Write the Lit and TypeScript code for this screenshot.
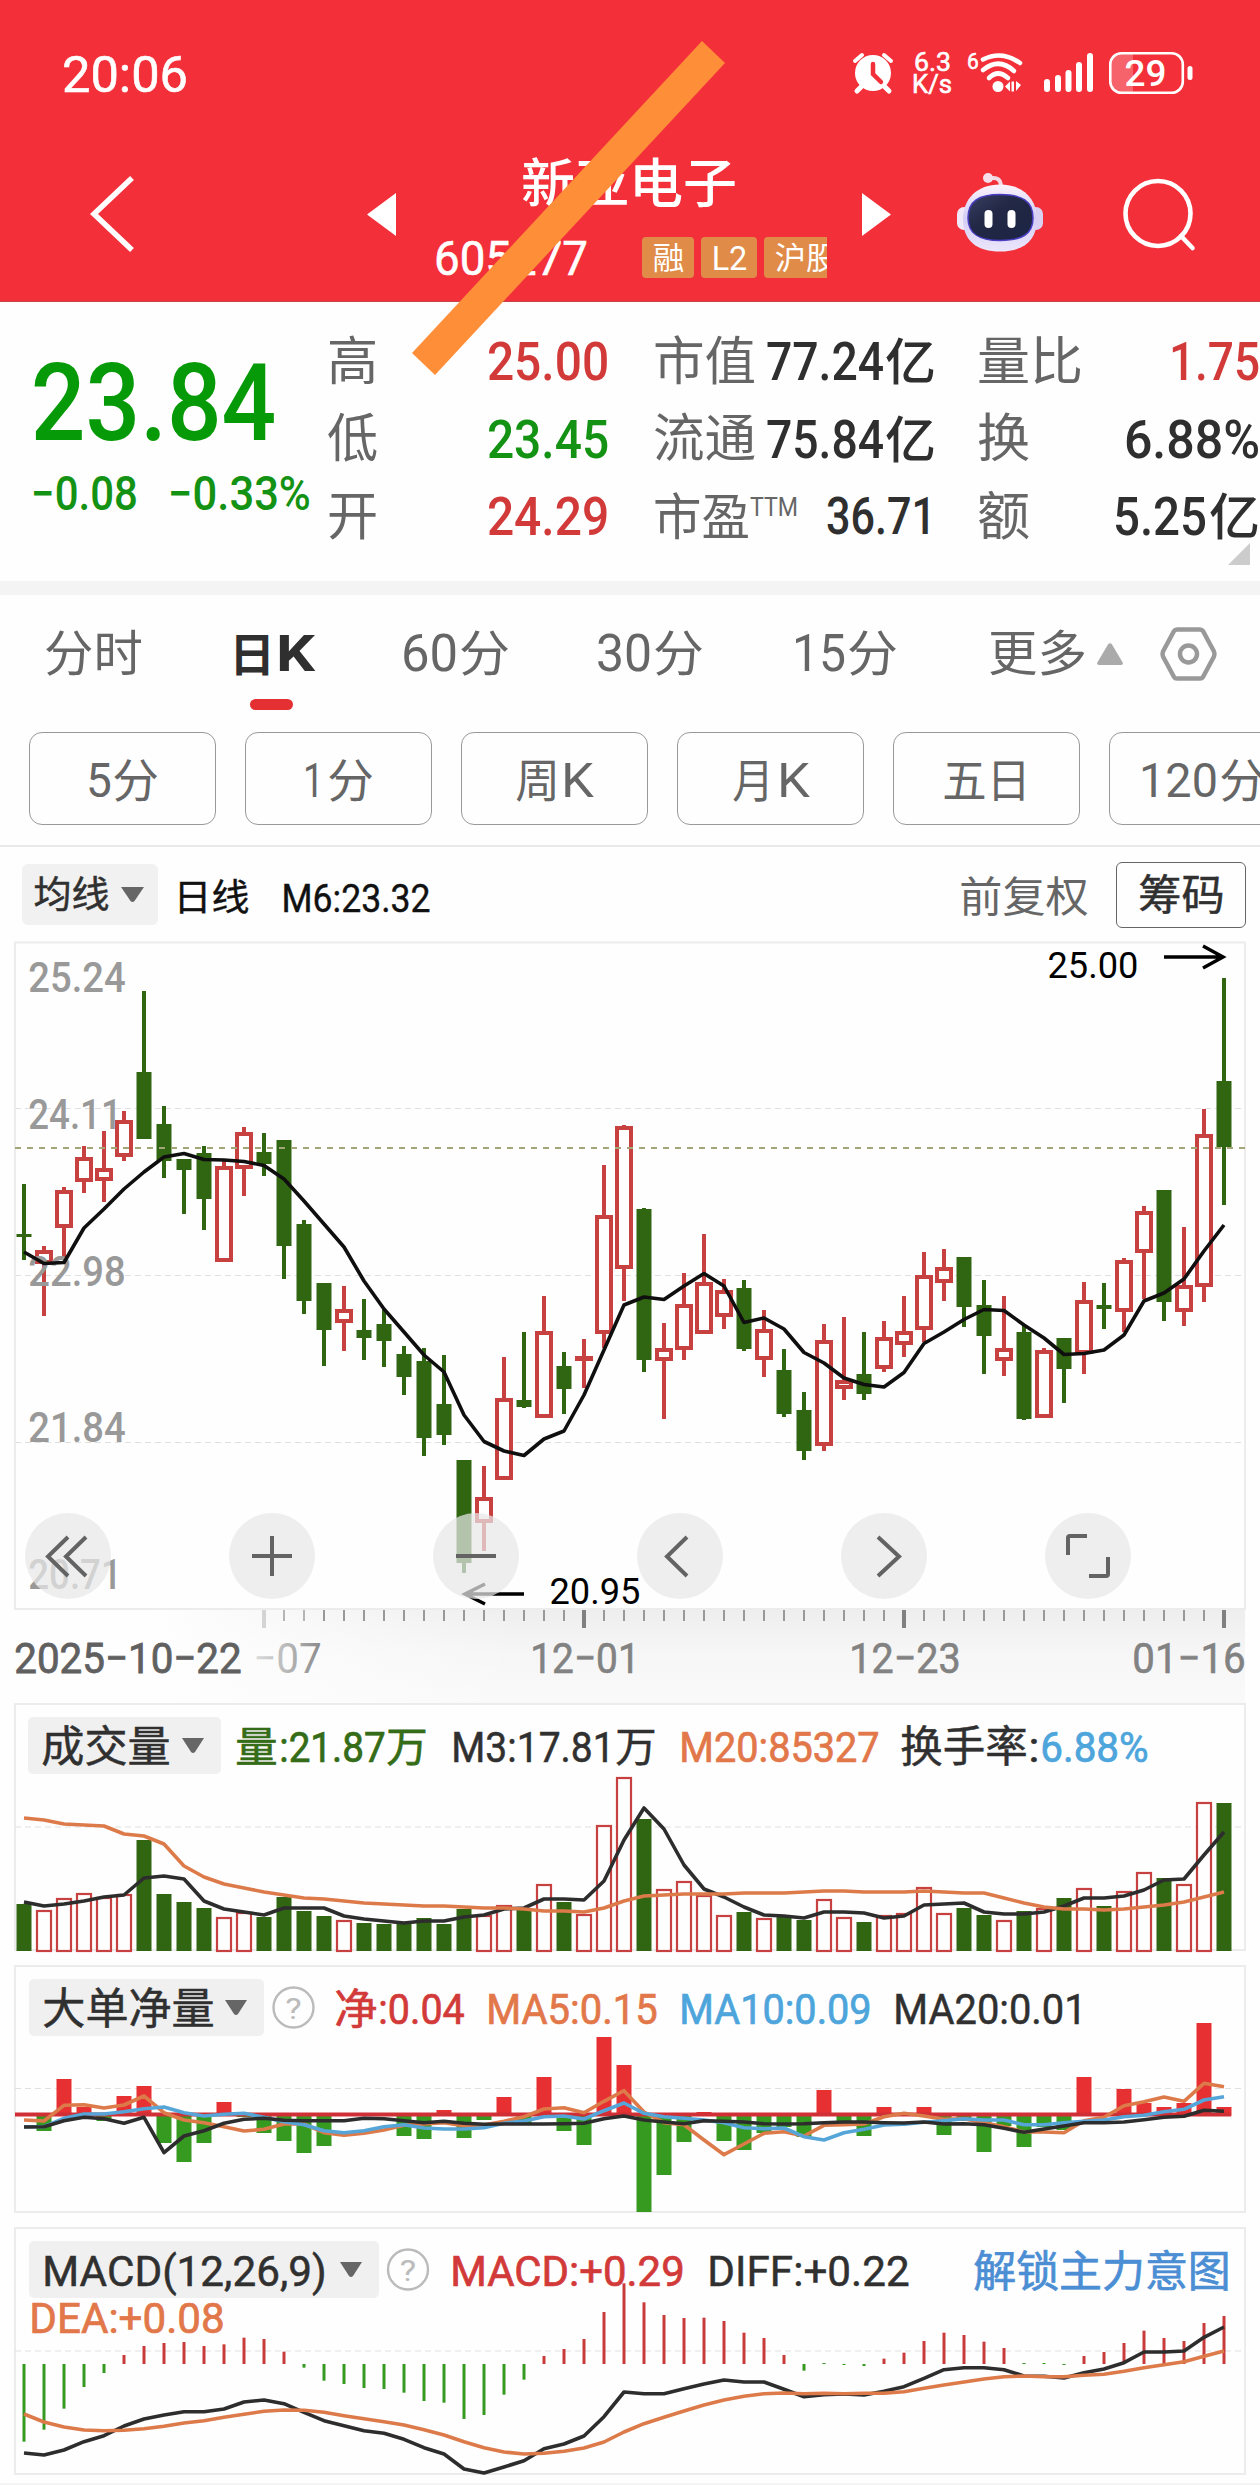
import { LitElement, html, svg, css } from "lit";
import { customElement } from "lit/decorators.js";

// A run of text: [text, x of its ink, ink width, optional font size]
type Run = [string, number, number, number?];

const run = (r: Run, size: number, base: number, cls = "") => {
  const s = r[3] ?? size;
  const side = s * 0.04;
  return svg`<text class=${cls} x=${r[1] - side} y=${base} font-size=${s} textLength=${r[2] + side * 2} lengthAdjust="spacingAndGlyphs">${r[0]}</text>`;
};

const label = (runs: Run[], size: number, cls = "") => {
  const last = runs[runs.length - 1];
  return html`<svg class="t ${cls}" width=${last[1] + last[2]} height=${size}>${runs.map((r) => run(r, size, size * 0.862))}</svg>`;
};

const X = (i: number) => 24 + 20 * i;

// Daily candles: [direction, high, body top, body bottom, low]
const candles: [string, number, number, number, number][] = [
  ["g", 1184, 1234, 1237, 1260], ["r", 1246, 1250, 1264, 1316], ["r", 1187, 1190, 1228, 1258], ["r", 1146, 1157, 1182, 1193],
  ["r", 1131, 1168, 1181, 1202], ["r", 1111, 1120, 1157, 1161], ["g", 991, 1072, 1139, 1139], ["g", 1106, 1124, 1161, 1178],
  ["g", 1159, 1159, 1170, 1214], ["g", 1146, 1153, 1199, 1230], ["r", 1161, 1166, 1262, 1262], ["r", 1127, 1132, 1169, 1196],
  ["g", 1133, 1152, 1164, 1176], ["g", 1140, 1140, 1246, 1279], ["g", 1220, 1224, 1301, 1314], ["g", 1283, 1283, 1330, 1366],
  ["r", 1286, 1309, 1323, 1351], ["g", 1299, 1330, 1338, 1360], ["g", 1309, 1324, 1341, 1367], ["g", 1346, 1354, 1377, 1395],
  ["g", 1348, 1361, 1438, 1456], ["g", 1355, 1404, 1435, 1445], ["g", 1460, 1460, 1563, 1573], ["r", 1466, 1497, 1523, 1551],
  ["r", 1357, 1398, 1480, 1480], ["g", 1332, 1400, 1407, 1408], ["r", 1296, 1331, 1418, 1418], ["g", 1352, 1366, 1389, 1414],
  ["r", 1339, 1356, 1361, 1388], ["r", 1165, 1215, 1334, 1348], ["r", 1125, 1126, 1269, 1301], ["g", 1208, 1209, 1360, 1372],
  ["r", 1323, 1348, 1361, 1419], ["r", 1273, 1304, 1350, 1360], ["r", 1234, 1282, 1334, 1334], ["r", 1279, 1290, 1317, 1329],
  ["g", 1280, 1288, 1349, 1351], ["r", 1310, 1329, 1360, 1377], ["g", 1349, 1370, 1414, 1417], ["g", 1392, 1410, 1451, 1460],
  ["r", 1324, 1340, 1446, 1451], ["r", 1317, 1380, 1389, 1400], ["g", 1332, 1374, 1394, 1400], ["r", 1321, 1337, 1369, 1372],
  ["r", 1296, 1331, 1345, 1357], ["r", 1252, 1275, 1330, 1342], ["r", 1249, 1267, 1283, 1301], ["g", 1257, 1257, 1307, 1327],
  ["g", 1280, 1305, 1336, 1374], ["r", 1296, 1348, 1361, 1376], ["g", 1325, 1332, 1419, 1420], ["r", 1348, 1350, 1418, 1418],
  ["g", 1338, 1338, 1369, 1403], ["r", 1282, 1300, 1354, 1374], ["g", 1283, 1305, 1309, 1329], ["r", 1258, 1260, 1312, 1332],
  ["r", 1206, 1211, 1253, 1299], ["g", 1190, 1190, 1302, 1321], ["r", 1227, 1285, 1312, 1326], ["r", 1109, 1134, 1287, 1302],
  ["g", 978, 1081, 1147, 1205],
];
const ma6 = [1252, 1263.5, 1262.5, 1228, 1209, 1189, 1172, 1157, 1153.5, 1159.5, 1160, 1161.5, 1165.5, 1179, 1201, 1224, 1247, 1281, 1309, 1332, 1355, 1372, 1415, 1441.5, 1451, 1455.5, 1439, 1431, 1395, 1350, 1305, 1297, 1299.5, 1286, 1273.5, 1286, 1322.5, 1318, 1329, 1352.5, 1363, 1378, 1384.5, 1387, 1372.5, 1343.5, 1332, 1319.5, 1309.5, 1310.5, 1325, 1338, 1354.5, 1353.5, 1350, 1335, 1301, 1293, 1279, 1251, 1225];

const vol = [1904, 1910, 1898, 1893, 1897, 1894, 1840, 1894, 1902, 1908, 1917, 1912, 1917, 1897, 1911, 1916, 1920, 1923, 1924, 1923, 1918, 1924, 1909, 1915, 1905, 1909, 1884, 1902, 1914, 1825, 1777, 1819, 1889, 1881, 1895, 1915, 1912, 1918, 1917, 1920, 1899, 1917, 1922, 1915, 1913, 1887, 1913, 1908, 1915, 1920, 1911, 1908, 1898, 1888, 1906, 1891, 1872, 1878, 1884, 1802, 1803];
const volM3 = [1902, 1906, 1904, 1901, 1897, 1895, 1878, 1876, 1879, 1901, 1909, 1912, 1915, 1908, 1908, 1908, 1916, 1919, 1921, 1923, 1921, 1921, 1917, 1915, 1909, 1908, 1899, 1899, 1900, 1881, 1840, 1808, 1829, 1865, 1889, 1897, 1907, 1915, 1916, 1918, 1912, 1912, 1913, 1918, 1916, 1905, 1904, 1903, 1912, 1914, 1914, 1912, 1906, 1898, 1898, 1896, 1890, 1880, 1879, 1855, 1832];
const volM20 = [1818, 1820, 1824, 1825, 1826, 1834, 1836, 1844, 1866, 1877, 1884, 1888, 1892, 1895, 1898, 1899, 1901, 1903, 1904, 1905, 1906, 1906, 1907, 1908, 1908, 1909, 1911, 1911, 1912, 1908, 1901, 1896, 1895, 1894, 1894, 1894, 1893, 1893, 1893, 1892, 1891, 1891, 1892, 1892, 1892, 1891, 1892, 1893, 1893, 1898, 1903, 1907, 1909, 1909, 1910, 1909, 1907, 1905, 1902, 1897, 1892];

const net = [2116, 2131, 2079, 2107, 2121, 2096, 2086, 2143, 2162, 2143, 2102, 2117, 2133, 2141, 2153, 2146, 2114, 2114, 2114, 2136, 2139, 2110, 2138, 2120, 2097, 2123, 2077, 2131, 2145, 2037, 2065, 2212, 2175, 2142, 2112, 2141, 2150, 2133, 2127, 2137, 2090, 2126, 2136, 2107, 2114, 2107, 2135, 2121, 2152, 2126, 2147, 2127, 2130, 2077, 2114, 2089, 2103, 2107, 2103, 2023, 2107];
// Moving averages of net volume, in thirds of a pixel below 1960
const netMa5 = [480, 483, 436, 434, 444, 435, 408, 458, 480, 488, 500, 513, 508, 492, 492, 518, 526, 520, 510, 496, 492, 488, 497, 495, 484, 470, 447, 443, 458, 424, 392, 456, 488, 494, 540, 584, 552, 520, 515, 528, 496, 494, 492, 470, 460, 468, 478, 476, 488, 500, 516, 516, 518, 482, 472, 437, 425, 411, 424, 370, 380];
const netMa10 = [500, 500, 475, 462, 462, 455, 446, 441, 458, 468, 463, 460, 472, 485, 494, 512, 518, 512, 500, 494, 504, 507, 507, 503, 490, 483, 470, 468, 477, 452, 429, 460, 470, 475, 480, 488, 503, 506, 504, 530, 540, 518, 508, 495, 493, 487, 482, 476, 480, 480, 494, 494, 488, 484, 480, 470, 466, 455, 448, 420, 410];
const netMa20 = [501, 500, 482, 472, 476, 490, 472, 578, 528, 512, 490, 478, 475, 481, 482, 482, 482, 475, 476, 482, 488, 484, 490, 493, 492, 492, 492, 491, 490, 476, 468, 480, 486, 491, 482, 484, 486, 491, 492, 491, 488, 486, 486, 488, 489, 486, 492, 491, 494, 505, 517, 507, 498, 488, 488, 486, 479, 472, 469, 451, 454];

// MACD series, in thirds of a pixel below 2220
const macd = [665, 629, 566, 501, 459, 405, 378, 369, 366, 378, 373, 353, 357, 395, 443, 482, 492, 504, 507, 518, 543, 548, 597, 585, 524, 479, 408, 387, 357, 276, 190, 247, 285, 294, 293, 303, 338, 354, 405, 452, 429, 435, 438, 416, 398, 363, 338, 345, 365, 384, 429, 429, 435, 408, 396, 369, 332, 354, 363, 309, 288];
const diff = [699, 705, 690, 665, 647, 618, 597, 585, 575, 575, 567, 546, 540, 551, 577, 602, 617, 632, 640, 658, 683, 702, 747, 759, 741, 722, 686, 672, 648, 590, 516, 521, 521, 506, 492, 480, 486, 486, 508, 530, 524, 522, 525, 514, 500, 475, 449, 443, 443, 449, 468, 469, 474, 458, 447, 428, 396, 396, 393, 352, 321];
const dea = [582, 606, 621, 630, 632, 631, 626, 619, 609, 602, 592, 583, 574, 570, 571, 577, 587, 596, 605, 615, 629, 645, 665, 683, 696, 702, 700, 694, 684, 666, 636, 611, 592, 573, 555, 540, 529, 521, 519, 521, 520, 521, 520, 520, 515, 505, 495, 486, 477, 470, 468, 470, 470, 466, 463, 454, 443, 434, 425, 409, 393];

const poly = (ys: number[], cls: string, f = (v: number) => v) =>
  svg`<polyline class="ln ${cls}" points=${ys.map((y, i) => `${X(i)},${f(y).toFixed(1)}`).join(" ")}></polyline>`;
const frame = (top: number, bottom: number) =>
  svg`<rect class="frame" x="15" y=${top} width="1230" height=${bottom - top}></rect>`;
const grid = (y: number) => svg`<line class="grid" x1="15" x2="1245" y1=${y} y2=${y}></line>`;
const help = (x: number, y: number) => svg`<circle class="help" cx=${x} cy=${y} r="20"></circle>${run(["?", x - 7, 14], 30, y + 11, "helpq")}`;
const pill = (x: number, y: number, w: number) => svg`<rect class="pill" x=${x} y=${y} width=${w} height="57" rx="5"></rect>`;
const down = (x: number, y: number) => svg`<path fill="#666" d="M${x} ${y}h22l-9 14q-2 2 -4 0z"></path>`;

@customElement("app-root")
export class AppRoot extends LitElement {
  static styles = css`
    :host { display: block; position: relative; width: 1260px; height: 2485px; overflow: hidden; background: #fefefe; font-family: Roboto, "Noto Sans CJK SC", sans-serif; }
    svg { display: block; flex: none; overflow: visible; }
    text { white-space: pre; }
    .t { fill: #666; }
    .w { fill: #fff; }
    .k { fill: #2f2f2f; font-weight: 500; }
    .blk { fill: #111; stroke: #111; stroke-width: 0.4; }
    .r { fill: #d23a3a; font-weight: 500; }
    .g { fill: #149214; font-weight: 500; }
    .G { fill: #079a08; font-weight: 500; }
    .b { font-weight: 700; fill: #2f2f2f; }
    .m { font-weight: 500; }
    .h { stroke: currentColor; stroke-width: 0.6; }
    header { height: 302px; background: #f32f39; box-sizing: border-box; padding-top: 48px; border-bottom: 1px solid #c8404a; color: #fff; }
    .status { display: flex; align-items: center; height: 50px; padding: 0 67px 0 64px; }
    .status .sp { flex: 1; }
    .speed { display: flex; flex-direction: column; margin: 0 16px 0 20px; }
    .signal { margin: 0 15px 0 21px; }
    .nav { display: flex; align-items: center; height: 176px; padding: 28px 0 0 91px; }
    .prev { margin-left: 233px; }
    .bot { margin: 0 80px 4px 66px; }
    .mid { width: 393px; height: 176px; margin: 0 35px 0 38px; overflow: hidden; display: flex; flex-direction: column; align-items: center; }
    .mid .title { margin: 31px 4px 27px 0; }
    .code { display: flex; align-items: center; width: 393px; height: 41px; }
    .tags { display: flex; gap: 7px; margin-left: 56px; width: 185px; overflow: hidden; }
    .tag { flex: none; display: flex; align-items: center; justify-content: center; height: 41px; border-radius: 4px; background: #e08c48; }
    .quote { height: 279px; display: flex; position: relative; padding-left: 35px; box-sizing: border-box; }
    .price { width: 294px; padding-top: 46px; flex: none; }
    .chg { display: flex; gap: 34px; margin: 14px 0 0 -2px; }
    .col { padding-top: 20px; flex: none; }
    .c1 { width: 278px; margin-right: 48px; }
    .c2 { width: 279px; margin-right: 45px; }
    .c3 { width: 279px; }
    .row { height: 77.5px; display: flex; align-items: center; justify-content: space-between; }
    .ttm { margin: 0 auto 0 3px; }
    .corner { position: absolute; left: 1228px; top: 241px; }
    .band { height: 14px; background: #f4f4f4; }
    .tabs { display: flex; align-items: center; height: 117px; padding-left: 46px; }
    .active { position: relative; margin: 0 89px 0 94px; }
    .t60 { margin-right: 90px; }
    .t30 { margin-right: 92px; }
    .t15 { margin-right: 94px; }
    .up { margin: 0 37px 0 12px; }
    .bar { position: absolute; left: 15px; top: 70px; width: 43px; height: 11px; border-radius: 5.5px; background: #e43033; }
    .chips { display: flex; gap: 29px; padding: 20px 0 20px 29px; overflow: hidden; border-bottom: 2px solid #e9e9e9; height: 93px; }
    .chip { flex: none; box-sizing: border-box; width: 187px; height: 93px; border: 1.5px solid #999; border-radius: 13px; display: flex; align-items: center; justify-content: center; padding-top: 2px; }
    .mabar { display: flex; align-items: center; height: 95px; padding: 0 14px 0 22px; }
    .mabar .sp { flex: 1; }
    .low { padding-top: 5px; }
    .m6 { margin-left: 35px; }
    .sel { width: 136px; height: 61px; box-sizing: border-box; background: #f1f1f1; border-radius: 6px; display: flex; align-items: center; gap: 13px; padding-left: 13px; margin-right: 16px; }
    .box { width: 130px; height: 66px; box-sizing: border-box; border: 1.5px solid #666; border-radius: 6px; display: flex; align-items: center; justify-content: center; margin-left: 29px; }
    .frame { fill: none; stroke: #ececec; stroke-width: 2; }
    .grid { stroke: #e0e0e0; stroke-width: 1.2; stroke-dasharray: 6 4; }
    .last { stroke: #a3a678; stroke-width: 2; stroke-dasharray: 6 6; }
    .ln { fill: none; stroke-width: 3.6; stroke-linejoin: round; }
    .lk { stroke: #0f0f0f; }
    .ld { stroke: #2d2d2d; }
    .lo { stroke: #dd7a4a; }
    .lb { stroke: #55a5d8; }
    .hollow { fill: #fefefe; stroke: #c84141; }
    .axis { fill: #999; font-weight: 500; }
    .pill { fill: #f0f0f0; }
    .help { fill: none; stroke: #bbb; stroke-width: 2.4; }
    .helpq { fill: #bbb; }
    .dk { fill: #303030; stroke: #303030; stroke-width: 0.5; }
    .vg { fill: #356c17; stroke: #356c17; stroke-width: 0.7; }
    .or { fill: #e2774a; stroke: #e2774a; stroke-width: 0.7; }
    .bl { fill: #4da5dc; stroke: #4da5dc; stroke-width: 0.7; }
    .rd { fill: #d23a3a; stroke: #d23a3a; stroke-width: 0.7; }
    .lk2 { fill: #4b8ed4; stroke: #4b8ed4; stroke-width: 0.7; }
    .date { fill: #828282; stroke: #828282; stroke-width: 0.6; }
    .date0 { fill: #606060; stroke: #606060; stroke-width: 0.8; }
    .disc { fill: #e7e7e7; fill-opacity: 0.72; }
    .ic { fill: none; stroke: #636363; stroke-width: 4; }
    .stripe { position: absolute; left: 0; top: 0; pointer-events: none; }
  `;

  header() {
    return html`<header>
      <div class="status">
        ${label([["20:06", 0, 122]], 50.6, "w h")}
        <div class="sp"></div>
        <svg width="40" height="40" viewBox="0 0 40 40" fill="none" stroke="#fff">
          <circle cx="20" cy="20" r="18" fill="#fff" stroke="none"></circle>
          <path d="M2 8l7-6M38 8l-7-6" stroke-width="4" stroke-linecap="round"></path>
          <path d="M8 34l-4 4M32 34l4 4" stroke-width="5" stroke-linecap="round"></path>
          <path d="M20 11v10l8 8" stroke="#f32f39" stroke-width="4.5" stroke-linecap="round"></path>
        </svg>
        <div class="speed">
          <svg class="w h" width="39" height="42">${run(["6.3", 2, 35], 25, 19)}${run(["K/s", 0, 38], 26, 41)}</svg>
        </div>
        <svg class="w" width="55" height="40" viewBox="0 0 55 40">
          ${run(["6", 0, 10], 22, 15.5, "h")}
          <g fill="none" stroke="#fff" stroke-width="4.6" stroke-linecap="round">
            <path d="M15 6.500Q34 -3 52 10"></path><path d="M15 17Q31 4 46 18"></path><path d="M21 25Q30 16 40 25"></path>
          </g>
          <circle cx="30" cy="33.500" r="5.500" fill="#fff"></circle>
          <path fill="#fff" d="M37 33.500l5-5v10zM43.500 28.500h2.500v10h-2.500zM48 28v10l5-6z"></path>
        </svg>
        <svg class="signal" width="50" height="40" viewBox="0 0 50 40" fill="#fff">
          <rect x="0" y="26" width="6" height="13" rx="3"></rect><rect x="11" y="22" width="6" height="17" rx="3"></rect>
          <rect x="21.500" y="17" width="6" height="22" rx="3"></rect><rect x="32" y="9" width="6" height="30" rx="3"></rect>
          <rect x="43" y="0" width="6" height="39" rx="3"></rect>
        </svg>
        <svg width="84" height="42" viewBox="0 0 84 42">
          <path d="M12 1.500H24V40.500H12Q1.500 40.500 1.500 30V12Q1.500 1.500 12 1.500z" fill="#fff" fill-opacity=".25"></path>
          <rect x="1.300" y="1.300" width="72.500" height="39.400" rx="11" fill="none" stroke="#fff" stroke-width="2.600"></rect>
          <rect x="78.500" y="14" width="5" height="14" rx="2.500" fill="#fff"></rect>
          ${run(["29", 17, 39], 37, 34, "w m")}
        </svg>
      </div>
      <div class="nav">
        <svg width="43" height="76" viewBox="0 0 43 76"><path d="M41 2L3 38L41 74" fill="none" stroke="#fff" stroke-width="5.500"></path></svg>
        <svg class="prev" width="29" height="43"><path d="M29 0V43L0 21.500z" fill="#fff"></path></svg>
        <div class="mid">
          <div class="title">${label([["新亚电子", 0, 212]], 53, "w m")}</div>
          <div class="code">
            ${label([["605277", 2, 150]], 49, "w h")}
            <div class="tags">
              <div class="tag" style="width:52px">${label([["融", 0, 29]], 31, "w")}</div>
              <div class="tag" style="width:56px">${label([["L2", 0, 33]], 34, "w")}</div>
              <div class="tag" style="width:84px">${label([["沪股", 0, 60]], 31, "w")}</div>
            </div>
          </div>
        </div>
        <svg width="29" height="43"><path d="M0 0V43L29 21.500z" fill="#fff"></path></svg>
        <svg class="bot" width="86" height="79" viewBox="0 0 86 79">
          <defs>
            <linearGradient id="hd" x1="0" y1="0" x2="0" y2="1"><stop offset="0" stop-color="#fbf3fb"></stop><stop offset=".5" stop-color="#d4cdf5"></stop><stop offset="1" stop-color="#ece6fb"></stop></linearGradient>
            <linearGradient id="fc" x1="0" y1="0" x2="1" y2="1"><stop offset="0" stop-color="#3a3f63"></stop><stop offset=".4" stop-color="#222845"></stop><stop offset="1" stop-color="#1b2444"></stop></linearGradient>
          </defs>
          <path d="M33 5.500Q44 3 44 14" fill="none" stroke="#f3d8e6" stroke-width="4"></path><circle cx="31" cy="5" r="5" fill="#f6dfeb"></circle>
          <rect x="0" y="34" width="14" height="23" rx="7" fill="#f2e9f8"></rect><rect x="72" y="34" width="14" height="23" rx="7" fill="#d9d0f2"></rect>
          <path d="M43 11.500C66 11.500 80 26 80 46C80 68 66 78.500 43 78.500C20 78.500 6 68 6 46C6 26 20 11.500 43 11.500z" fill="url(#hd)"></path>
          <path d="M43 21.500C65 21.500 76 28 76 45C76 61 65 67.500 43 67.500C22 67.500 11 61 11 45C11 28 22 21.500 43 21.500z" fill="url(#fc)" stroke="#4a3fc4" stroke-width="1.500"></path>
          <rect x="27.500" y="37" width="8" height="18" rx="4" fill="#fff"></rect><rect x="50.500" y="37" width="8" height="18" rx="4" fill="#fff"></rect>
        </svg>
        <svg width="72" height="72" viewBox="0 0 72 72" fill="none" stroke="#fff" stroke-width="4.600" stroke-linecap="round"><circle cx="35" cy="35.500" r="32.500"></circle><path d="M58 58L69.500 70"></path></svg>
      </div>
    </header>`;
  }

  quote() {
    return html`<section class="quote">
      <div class="price">
        ${label([["23.84", 0, 237]], 107, "G")}
        <div class="chg">${label([["−0.08", 0, 103]], 47.5, "g")}${label([["−0.33%", 0, 139]], 47.5, "g")}</div>
      </div>
      <div class="col c1">
        <div class="row">${label([["高", 0, 47]], 52)}${label([["25.00", 0, 118]], 53, "r")}</div>
        <div class="row">${label([["低", 0, 47]], 52)}${label([["23.45", 0, 118]], 53, "g")}</div>
        <div class="row">${label([["开", 0, 47]], 52)}${label([["24.29", 0, 118]], 53, "r")}</div>
      </div>
      <div class="col c2">
        <div class="row">${label([["市值", 0, 99]], 52)}${label([["77.24", 1, 114], ["亿", 120, 47, 50]], 53, "k")}</div>
        <div class="row">${label([["流通", 0, 99]], 52)}${label([["75.84", 1, 114], ["亿", 120, 47, 50]], 53, "k")}</div>
        <div class="row">${label([["市盈", 0, 93, 50]], 52)}<svg class="t ttm" width="48" height="53">${run(["TTM", 0, 46], 26, 27)}</svg>${label([["36.71", 0, 106]], 51, "k")}</div>
      </div>
      <div class="col c3">
        <div class="row">${label([["量比", 0, 102]], 52)}${label([["1.75", 0, 87]], 53, "r")}</div>
        <div class="row">${label([["换", 0, 49]], 52)}${label([["6.88%", 0, 132]], 53, "k")}</div>
        <div class="row">${label([["额", 0, 49]], 52)}${label([["5.25", 0, 90], ["亿", 96, 47, 50]], 53, "k")}</div>
      </div>
      <svg class="corner" width="22" height="22"><path d="M22 0V22H0z" fill="#ccc"></path></svg>
    </section>
    <div class="band"></div>`;
  }

  tabs() {
    const chips: Run[][] = [
      [["5", 0, 22, 48], ["分", 26, 43, 46]], [["1", 0, 17, 48], ["分", 24, 43, 46]], [["周", 0, 41, 46], ["K", 46, 29, 48]],
      [["月", 0, 38, 46], ["K", 45, 29, 48]], [["五日", 0, 85, 46]],
      [["120", 0, 75, 48], ["分", 80, 43, 46]],
    ];
    return html`<nav class="tabs">
        ${label([["分时", 0, 95]], 49)}
        <div class="active">${label([["日", -4, 42, 46], ["K", 43, 35, 50], ["", 79, 0]], 49, "b")}<div class="bar"></div></div>
        <div class="t60">${label([["60", 0, 53, 51], ["分", 58, 47, 49]], 49)}</div>
        <div class="t30">${label([["30", 0, 52, 51], ["分", 57, 47, 49]], 49)}</div>
        <div class="t15">${label([["15", 0, 50, 51], ["分", 55, 47, 49]], 49)}</div>
        ${label([["更多", 0, 95]], 49)}
        <svg class="up" width="26" height="22"><path d="M11 1.500Q13 -1 15 1.500L26 20Q26 22 24 22H2Q0 22 0 20z" fill="#aaa"></path></svg>
        <svg width="57" height="54" viewBox="0 0 57 54" fill="none" stroke="#999" stroke-width="4.500" stroke-linejoin="round">
          <path d="M17 2.500H40Q42 2.500 43 4L54 24.500Q55 27 54 29.500L43 50Q42 51.500 40 51.500H17Q15 51.500 14 50L3 29.500Q2 27 3 24.500L14 4Q15 2.500 17 2.500z"></path><circle cx="28.500" cy="27" r="8.500"></circle>
        </svg>
      </nav>
      <div class="chips">${chips.map((c) => html`<div class="chip">${label(c, 46)}</div>`)}</div>
      <div class="mabar">
        <div class="sel">${label([["均线", 0, 73]], 37, "dk")}<svg width="23" height="15"><path d="M0 0H23L13.500 14Q11.500 16 9.500 14z" fill="#666"></path></svg></div>
        <div class="low">${label([["日线", 1, 73]], 37, "blk")}</div>
        <div class="low m6">${label([["M6:23.32", 0, 146]], 39, "blk")}</div>
        <div class="sp"></div>
        <div class="low">${label([["前复权", 0, 126]], 42)}</div>
        <div class="box">${label([["筹码", 0, 83]], 42, "dk")}</div>
      </div>`;
  }

  price() {
    const C = 1556;
    return html`<svg width="1260" height="762" viewBox="0 942 1260 762">
      <defs>
        <linearGradient id="av" x1="0" y1="0" x2="0" y2="1"><stop offset="0" stop-color="#eee"></stop><stop offset=".45" stop-color="#f6f6f6"></stop><stop offset="1" stop-color="#fafafa"></stop></linearGradient>
        <linearGradient id="ah" x1="0" y1="0" x2="1" y2="0"><stop offset="0" stop-color="#fefefe"></stop><stop offset=".12" stop-color="#fefefe"></stop><stop offset=".42" stop-color="#fefefe" stop-opacity="0"></stop></linearGradient>
        <linearGradient id="d7" x1="0" y1="0" x2="1" y2="0"><stop offset="0" stop-color="#ddd"></stop><stop offset=".45" stop-color="#bbb"></stop><stop offset="1" stop-color="#8a8a8a"></stop></linearGradient>
      </defs>
      <rect x="0" y="1610" width="1245" height="94" fill="url(#av)"></rect>
      <rect x="0" y="1610" width="1245" height="94" fill="url(#ah)"></rect>
      ${grid(1108.5)}${grid(1275.5)}${grid(1442.5)}${frame(942.5, 1609)}
      ${candles.map(([d, h, t, b, l], i) => {
        const x = X(i);
        return d === "g"
          ? svg`<path fill="#306611" d="M${x - 2} ${h}h4V${l}h-4zM${x - 7.5} ${t}h15V${b}h-15z"></path>`
          : svg`<path fill="#c84141" d="M${x - 2} ${h}h4V${l}h-4z"></path>${b - t < 6
              ? svg`<rect x=${x - 9} y=${t} width="18" height=${b - t} fill="#c84141"></rect>`
              : svg`<rect class="hollow" stroke-width="4" x=${x - 7} y=${t + 2} width="14" height=${b - t - 4}></rect>`}`;
      })}
      <line class="last" x1="15" x2="1245" y1="1148" y2="1148"></line>
      ${run(["25.24", 30, 94], 42.5, 992, "axis")}${run(["24.11", 30, 90], 42.5, 1129, "axis")}${run(["22.98", 30, 94], 42.5, 1286, "axis")}
      ${run(["21.84", 30, 94], 42.5, 1442, "axis")}${run(["20.71", 30, 90], 42.5, 1589, "axis")}
      ${poly(ma6, "lk")}
      ${run(["25.00", 1049, 88], 37, 978, "")}
      <path d="M1164 957H1223M1203 946L1223 957L1203 968" fill="none" stroke="#000" stroke-width="3.500"></path>
      ${run(["20.95", 551, 88], 37, 1604, "")}
      <path d="M524 1594H465M485 1584L465 1594L485 1604" fill="none" stroke="#000" stroke-width="3.500"></path>
      ${[68, 272, 476, 680, 884, 1088].map((x) => svg`<circle class="disc" cx=${x} cy=${C} r="43"></circle>`)}
      <g class="ic">
        <path d="M68 1537L48 1556.500L68 1576M86 1537L66 1556.500L86 1576"></path>
        <path d="M252 1556H292M272 1536V1576M456 1556H496"></path>
        <path d="M687 1537L667 1556.500L687 1576M878 1537L899 1556.500L878 1576"></path>
        <path d="M1087 1536H1070Q1068 1536 1068 1538V1555M1108 1557V1574Q1108 1576 1106 1576H1089"></path>
      </g>
      ${Array.from({ length: 49 }, (_, k) => k + 12).map((i) => {
        const major = (i - 12) % 16 === 0;
        const w = major ? 4 : 2;
        return svg`<rect x=${X(i) - w / 2} y="1610" width=${w} height=${major ? 18 : 11} fill=${i === 12 ? "#d4d4d4" : i < 15 ? "#b5b5b5" : major ? "#808080" : "#999"}></rect>`;
      })}
      ${run(["2025−10−22", 16, 224], 42.5, 1673, "date0")}
      <g fill="url(#d7)">${run(["−07", 255, 65], 42.5, 1673)}</g>
      ${run(["12−01", 532, 106], 42.5, 1673, "date")}${run(["12−23", 851, 108], 42.5, 1673, "date")}${run(["01−16", 1134, 110], 42.5, 1673, "date")}
    </svg>`;
  }

  volume() {
    return html`<svg width="1260" height="262" viewBox="0 1704 1260 262">
      ${frame(1704, 1950)}${grid(1827)}
      ${vol.map((y, i) => candles[i][0] === "g"
        ? svg`<rect fill="#306611" x=${X(i) - 7.5} y=${y} width="15" height=${1951 - y}></rect>`
        : svg`<rect class="hollow" stroke-width="2.200" x=${X(i) - 7} y=${y + 1} width="14" height=${1950 - y}></rect>`)}
      ${poly(volM3, "ld")}${poly(volM20, "lo")}
      ${pill(28, 1717, 193)}${run(["成交量", 43, 126], 43, 1762, "dk")}${down(182, 1738)}
      <g class="vg">${run(["量", 237, 39], 42, 1762)}${run([":21.87", 281, 103], 42, 1762)}${run(["万", 388, 38], 42, 1762)}</g>
      <g class="dk">${run(["M3:17.81", 453, 160], 42, 1762)}${run(["万", 617, 38], 42, 1762)}${run(["换手率", 902, 124], 43, 1762)}${run([":", 1030, 8], 42, 1762)}</g>
      ${run(["M20:85327", 681, 197], 42, 1762, "or")}${run(["6.88%", 1042, 105], 42, 1762, "bl")}
    </svg>`;
  }

  netFlow() {
    const f = (v: number) => 1960 + v / 3;
    return html`<svg width="1260" height="262" viewBox="0 1966 1260 262">
      ${frame(1966, 2212)}${grid(2088.5)}
      ${net.map((y, i) => y < 2114
        ? svg`<rect fill="#e73032" x=${X(i) - 7.5} y=${y} width="15" height=${2116 - y}></rect>`
        : svg`<rect fill="#369a20" x=${X(i) - 7.5} y="2114" width="15" height=${y - 2114}></rect>`)}
      <rect x="15" y="2112.500" width="1216" height="4" fill="#cf2f35"></rect>
      ${poly(netMa5, "lo", f)}${poly(netMa10, "lb", f)}${poly(netMa20, "ld", f)}
      ${pill(29, 1979, 235)}${run(["大单净量", 44, 169], 43, 2024, "dk")}${down(225, 2000)}${help(293.5, 2007.5)}
      <g class="rd">${run(["净", 336, 40], 42, 2024)}${run([":0.04", 380, 83], 42, 2023.5)}</g>
      ${run(["MA5:0.15", 488, 168], 42, 2023.5, "or")}${run(["MA10:0.09", 681, 189], 42, 2023.5, "bl")}${run(["MA20:0.01", 895, 190], 42, 2023.5, "dk")}
    </svg>`;
  }

  macdChart() {
    const f = (v: number) => 2220 + v / 3;
    return html`<svg width="1260" height="257" viewBox="0 2228 1260 257">
      ${frame(2228, 2474)}${grid(2351)}
      ${pill(29, 2241, 350)}${run(["MACD(12,26,9)", 44, 281], 42, 2286, "dk")}${down(340, 2262)}${help(408, 2269.5)}
      ${run(["MACD:+0.29", 452, 231], 42, 2286, "rd")}${run(["DIFF:+0.22", 709, 199], 42, 2286, "dk")}
      ${run(["解锁主力意图", 975, 254], 43, 2286.5, "lk2")}${run(["DEA:+0.08", 31, 192], 42, 2333, "or")}
      ${macd.map((v, i) => {
        const y = f(v);
        return svg`<rect fill=${y < 2363.5 && v !== 429 ? "#c93a3a" : "#369a20"} x=${X(i) - 1.5} y=${Math.min(y, 2364)} width="3" height=${v === 429 ? 1 : Math.abs(y - 2364)}></rect>`;
      })}
      ${poly(diff, "ld", f)}${poly(dea, "lo", f)}
      <rect x="0" y="2483" width="1260" height="2" fill="#f4f4f4"></rect>
    </svg>`;
  }

  render() {
    return html`${this.header()}${this.quote()}${this.tabs()}${this.price()}${this.volume()}${this.netFlow()}${this.macdChart()}
      <svg class="stripe" width="1260" height="400"><path d="M702 41L725 63L435 375L412 353z" fill="#ff8e39"></path></svg>`;
  }
}
